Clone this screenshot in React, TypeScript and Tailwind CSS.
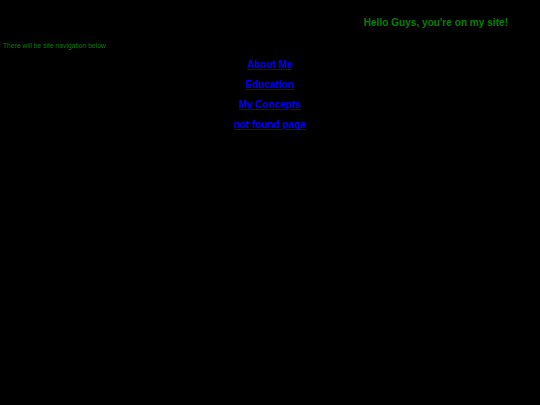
export default function App() {
  const links = ['About Me', 'Education', 'My Concepts', 'not found page'];

  return (
    <div className="min-h-[405px] w-full bg-black font-['Liberation_Sans',Arial,sans-serif]">
      {/* ── Header ── */}
      <header className="flex justify-end pt-[15.5px] pr-[32px]">
        <h3 className="text-[10.1px] font-bold leading-[13px] text-[#008000]">
          Hello Guys, you're on my site!
        </h3>
      </header>

      <p className="mt-[13.5px] pl-[3px] text-[6.75px] leading-[8px] text-[#008000]">
        There will be site navigation below
      </p>

      {/* ── Navigation ── */}
      <nav className="mt-[4.5px] flex flex-col items-center">
        {links.map(l => (
          <a
            key={l}
            href="#"
            className="text-[10px] font-bold leading-[20.33px] text-[#0000ee] underline"
          >
            {l}
          </a>
        ))}
      </nav>
    </div>
  );
}
